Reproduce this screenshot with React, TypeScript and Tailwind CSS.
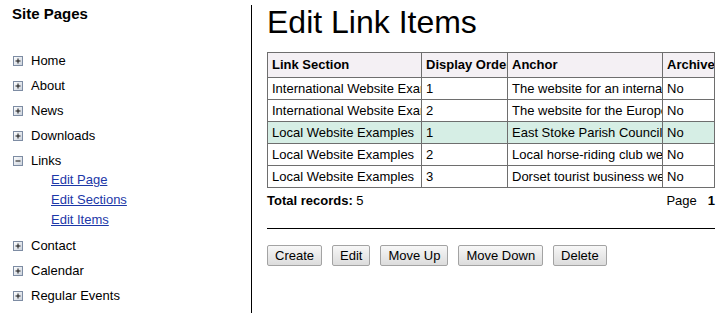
import React from "react";

type NavItem = { label: string; open?: boolean; children?: string[] };

const NAV: NavItem[] = [
  { label: "Home" },
  { label: "About" },
  { label: "News" },
  { label: "Downloads" },
  { label: "Links", open: true, children: ["Edit Page", "Edit Sections", "Edit Items"] },
  { label: "Contact" },
  { label: "Calendar" },
  { label: "Regular Events" },
];

const ROWS = [
  ["International Website Examples", "1", "The website for an international company", "No"],
  ["International Website Examples", "2", "The website for the European office", "No"],
  ["Local Website Examples", "1", "East Stoke Parish Council", "No"],
  ["Local Website Examples", "2", "Local horse-riding club website", "No"],
  ["Local Website Examples", "3", "Dorset tourist business website", "No"],
];

function Expander({ open }: { open?: boolean }) {
  return (
    <svg width="10" height="10" viewBox="0 0 10 10" className="shrink-0">
      <defs>
        <linearGradient id={open ? "exp-o" : "exp-c"} x1="0" y1="0" x2="1" y2="1">
          <stop offset="0" stopColor="#ffffff" />
          <stop offset="1" stopColor="#c9d0da" />
        </linearGradient>
      </defs>
      <rect x="0.5" y="0.5" width="9" height="9" fill={`url(#${open ? "exp-o" : "exp-c"})`} stroke="#7d8ca3" />
      <path d="M2.5 5h5" stroke="#111" />
      {!open && <path d="M5 2.5v5" stroke="#111" />}
    </svg>
  );
}

function Cell({ children, head, hl }: { children: React.ReactNode; head?: boolean; hl?: boolean }) {
  return (
    <div
      className={`border-r border-b border-[#6e6e6e] pl-[4px] overflow-hidden whitespace-nowrap flex items-center ${
        head ? "h-[25px] font-bold bg-[#f4f0f4]" : "h-[22px]"
      } ${hl ? "bg-[#d6eee5]" : ""}`}
    >
      {children}
    </div>
  );
}

export default function App() {
  return (
    <div className="flex h-[314px] pt-[5px] pb-px bg-white text-black text-[13px] font-['Liberation_Sans',Arial,sans-serif]">
      {/* ── Sidebar ── */}
      <aside className="w-[252px] shrink-0 h-full border-r border-black pl-3">
        <h2 className="text-[15px] font-bold leading-[18px]">Site Pages</h2>
        <ul className="mt-[25px]">
          {NAV.map((item) => (
            <li key={item.label}>
              <div className="h-[25px] flex items-center pl-px">
                <Expander open={item.open} />
                <span className="ml-[8px]">{item.label}</span>
              </div>
              {item.children && (
                <ul className="-mt-[3px] mb-[3px] pl-[39px]">
                  {item.children.map((c) => (
                    <li key={c} className="h-5 flex items-center">
                      <a href="#" className="text-[#1c38a8] underline">
                        {c}
                      </a>
                    </li>
                  ))}
                </ul>
              )}
            </li>
          ))}
        </ul>
      </aside>

      {/* ── Main ── */}
      <main className="flex-1 pl-[15px] pr-[8px]">
        <h1 className="mt-px text-[32px] leading-[32px] font-normal">Edit Link Items</h1>

        <div className="mt-[14px] w-[448px] overflow-hidden border-t border-l border-r border-[#6e6e6e]">
          <div className="grid grid-cols-[154px_86px_155px_80px] w-[475px]">
            <Cell head>Link Section</Cell>
            <Cell head>Display Order</Cell>
            <Cell head>Anchor</Cell>
            <Cell head>Archived</Cell>
            {ROWS.map((r, i) =>
              r.map((v, j) => (
                <Cell key={`${i}-${j}`} hl={i === 2}>
                  {v}
                </Cell>
              ))
            )}
          </div>
        </div>

        <div className="mt-[3px] w-[448px] h-5 flex items-center justify-between">
          <p>
            <span className="font-bold">Total records:</span> 5
          </p>
          <p className="flex items-center">
            Page<span className="ml-[11px] font-bold">1</span>
          </p>
        </div>

        <div className="mt-[17px] w-[448px] h-px bg-black" />

        <div className="mt-[16px] flex gap-[10px]">
          {["Create", "Edit", "Move Up", "Move Down", "Delete"].map((b) => (
            <button
              key={b}
              className="h-[21px] px-[7px] border border-[#a3a3a3] rounded-[2px] bg-gradient-to-b from-[#f7f7f7] to-[#dcdcdc] text-[13px] leading-none"
            >
              {b}
            </button>
          ))}
        </div>
      </main>
    </div>
  );
}
